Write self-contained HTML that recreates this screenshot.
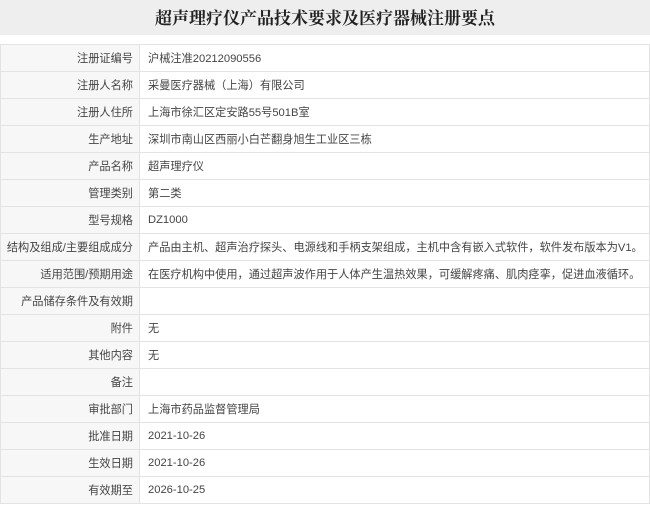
<!DOCTYPE html>
<html><head><meta charset="utf-8"><style>
body{margin:0;width:650px;height:506px;overflow:hidden;background:#fff;font-family:"Liberation Sans","Noto Sans CJK SC",sans-serif;}
.t{height:35px;background:#eeeeee;text-align:center;line-height:37px;font-family:"Liberation Serif","Noto Serif CJK SC",serif;font-weight:bold;font-size:17px;color:#222;}
table{position:absolute;top:44px;left:0;width:650px;border-collapse:collapse;table-layout:fixed;}
td{height:26px;border:1px solid #e3e3e3;font-size:11.2px;color:#444;padding:0;white-space:nowrap;overflow:hidden;}
td.l{width:139px;background:#f7f7f7;text-align:right;padding-right:6px;box-sizing:border-box;}
td.v{padding-left:8px;}
</style></head><body>
<div class="t">超声理疗仪产品技术要求及医疗器械注册要点</div>
<table>
<tr><td class="l">注册证编号</td><td class="v">沪械注准20212090556</td></tr>
<tr><td class="l">注册人名称</td><td class="v">采曼医疗器械（上海）有限公司</td></tr>
<tr><td class="l">注册人住所</td><td class="v">上海市徐汇区定安路55号501B室</td></tr>
<tr><td class="l">生产地址</td><td class="v">深圳市南山区西丽小白芒翻身旭生工业区三栋</td></tr>
<tr><td class="l">产品名称</td><td class="v">超声理疗仪</td></tr>
<tr><td class="l">管理类别</td><td class="v">第二类</td></tr>
<tr><td class="l">型号规格</td><td class="v">DZ1000</td></tr>
<tr><td class="l">结构及组成/主要组成成分</td><td class="v">产品由主机、超声治疗探头、电源线和手柄支架组成，主机中含有嵌入式软件，软件发布版本为V1。</td></tr>
<tr><td class="l">适用范围/预期用途</td><td class="v">在医疗机构中使用，通过超声波作用于人体产生温热效果，可缓解疼痛、肌肉痉挛，促进血液循环。</td></tr>
<tr><td class="l">产品储存条件及有效期</td><td class="v"></td></tr>
<tr><td class="l">附件</td><td class="v">无</td></tr>
<tr><td class="l">其他内容</td><td class="v">无</td></tr>
<tr><td class="l">备注</td><td class="v"></td></tr>
<tr><td class="l">审批部门</td><td class="v">上海市药品监督管理局</td></tr>
<tr><td class="l">批准日期</td><td class="v">2021-10-26</td></tr>
<tr><td class="l">生效日期</td><td class="v">2021-10-26</td></tr>
<tr><td class="l">有效期至</td><td class="v">2026-10-25</td></tr>
</table>
</body></html>
